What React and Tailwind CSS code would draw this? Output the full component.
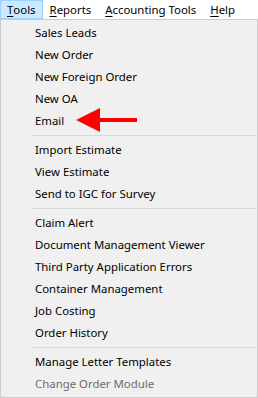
import React from "react";

const groups = [
  ["Sales Leads", "New Order", "New Foreign Order", "New OA", "Email"],
  ["Import Estimate", "View Estimate", "Send to IGC for Survey"],
  ["Claim Alert", "Document Management Viewer", "Third Party Application Errors", "Container Management", "Job Costing", "Order History"],
  ["Manage Letter Templates", "Change Order Module"],
];

function Top({ first, rest, active }) {
  return (
    <div
      className={
        "h-[19px] flex items-center px-[6px] border " +
        (active ? "bg-[#cce8ff] border-[#99d1ff]" : "border-transparent")
      }
    >
      <span className="underline underline-offset-[2px] decoration-1">{first}</span>
      <span>{rest}</span>
    </div>
  );
}

export default function App() {
  return (
    <div
      className="w-[258px] h-[398px] bg-white text-black text-[11.4px] leading-none relative overflow-hidden"
      style={{ fontFamily: '"Noto Sans", "Open Sans", sans-serif' }}
    >
      <div className="flex h-[19px]">
        <Top first="T" rest="ools" active />
        <Top first="R" rest="eports" />
        <Top first="A" rest="ccounting Tools" />
        <Top first="H" rest="elp" />
      </div>
      <div className="w-[258px] h-[379px] bg-[#f0f0f0] border border-[#cccccc] py-[2px] flex flex-col">
        {groups.map((g, gi) => (
          <React.Fragment key={gi}>
            {gi > 0 && (
              <div className="h-[7px] flex items-center pl-[30px] pr-[1px]">
                <div className="h-px w-full bg-[#d7d7d7]" />
              </div>
            )}
            {g.map((t) => (
              <div
                key={t}
                className={
                  "h-[22px] flex items-center pl-[34px] " +
                  (t === "Change Order Module" ? "text-[#6d6d6d]" : "")
                }
              >
                {t}
              </div>
            ))}
          </React.Fragment>
        ))}
      </div>
      <svg className="absolute left-0 top-0" width="258" height="398">
        <polygon points="76,120 100,108 100,132" fill="#ff0000" />
        <rect x="99" y="118" width="38" height="4" fill="#ff0000" />
      </svg>
    </div>
  );
}
